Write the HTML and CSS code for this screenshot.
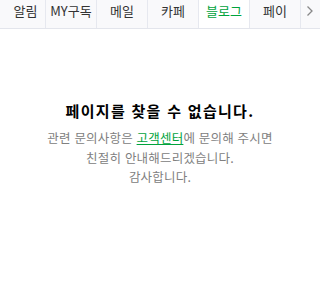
FILE: index.html
```html
<!DOCTYPE html>
<html lang="ko">
<head>
<meta charset="utf-8">
<link rel="stylesheet" href="styles.css">
</head>
<body>
<nav class="tabs">
  <div class="tab first">알림</div>
  <div class="tab">MY구독</div>
  <div class="tab">메일</div>
  <div class="tab">카페</div>
  <div class="tab active">블로그</div>
  <div class="tab">페이</div>
  <div class="more"><svg width="8" height="12" viewBox="0 0 8 12"><path d="M1.5 1.5 L6 6 L1.5 10.5" fill="none" stroke="#888" stroke-width="1.3"/></svg></div>
</nav>
<main class="error">
  <h1 class="title">페이지를 찾을 수 없습니다.</h1>
  <p class="desc">관련 문의사항은 <a class="link" href="#">고객센터</a>에 문의해 주시면<br>친절히 안내해드리겠습니다.<br>감사합니다.</p>
</main>
</body>
</html>
```
FILE: styles.css
```css
html, body {
  margin: 0;
  padding: 0;
  background: #fff;
  font-family: "Noto Sans CJK KR", "Noto Sans", sans-serif;
}
.tabs {
  display: flex;
  height: 28px;
  background: #f9f9fb;
  border-bottom: 1px solid #e3e5ec;
  overflow: hidden;
}
.tab {
  flex: 0 0 51px;
  display: flex;
  align-items: center;
  justify-content: center;
  font-size: 13px;
  color: #333;
  border-right: 1px solid #e6e8ef;
  height: 28px;
  padding-bottom: 7px;
  box-sizing: border-box;
  line-height: 1;
}
.tab.first {
  flex-basis: 46px;
  padding-left: 6px;
}
.tab.active {
  background: #fff;
  color: #00a33c;
  height: 29px;
  padding-bottom: 8px;
  position: relative;
  z-index: 1;
}
.more {
  flex: 1;
  display: flex;
  align-items: center;
  justify-content: center;
  padding: 0 2px 7px 0;
}
.error {
  text-align: center;
  padding-top: 72px;
}
.title {
  margin: 0;
  font-size: 15px;
  font-weight: bold;
  letter-spacing: 1.3px;
  color: #000;
  line-height: 20px;
}
.desc {
  margin: 7px 0 0;
  font-size: 12.5px;
  letter-spacing: 0.2px;
  line-height: 19.5px;
  color: #808080;
}
.link {
  color: #00a33c;
  text-decoration: underline;
}
```
